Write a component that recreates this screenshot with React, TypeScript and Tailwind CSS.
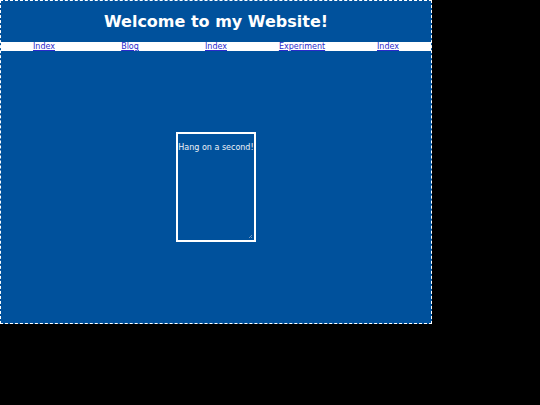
export default function App() {
  const links = ["Index", "Blog", "Index", "Experiment", "Index"];

  return (
    <div className="w-[540px] h-[405px] bg-black" style={{ fontFamily: "Verdana, 'DejaVu Sans', sans-serif" }}>
      <div className="w-[432px] h-[324px] border border-dashed border-white bg-[#00519c] flex flex-col">
        {/* header */}
        <div className="h-[41px] pt-[1px] flex items-center justify-center">
          <h1 className="text-[16px] font-bold text-white leading-none">Welcome to my Website!</h1>
        </div>

        {/* nav */}
        <nav className="h-[9px] bg-white flex">
          {links.map((l, i) => (
            <a key={i} href="#" className="flex-1 text-center text-[8px] leading-[9px] text-[#2a2acc] underline">
              {l}
            </a>
          ))}
        </nav>

        {/* main */}
        <div className="flex-1 flex items-center justify-center">
          <div className="relative w-[80px] h-[110px] border-2 border-white">
            <p className="pt-[8px] text-center text-[8px] text-[#eef2f8] whitespace-nowrap">Hang on a second!</p>
            <svg className="absolute right-[1px] bottom-[1px]" width="5" height="5" viewBox="0 0 5 5">
              <path d="M4 1 L1 4 M4 3 L3 4" stroke="#8aa6c8" strokeWidth="0.8" />
            </svg>
          </div>
        </div>
      </div>
    </div>
  );
}
